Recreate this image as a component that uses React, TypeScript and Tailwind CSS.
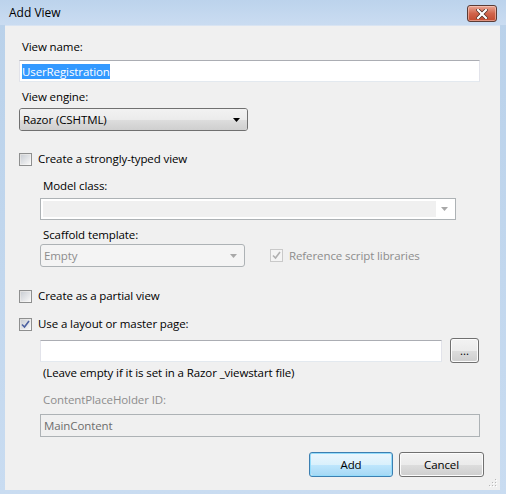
import React from 'react';

function Arrow({ disabled = false }: { disabled?: boolean }) {
  return (
    <svg width="7" height="4" viewBox="0 0 7 4" className="shrink-0">
      <path d="M0 0H7L3.5 4Z" fill={disabled ? '#a8a8a8' : '#000'} />
    </svg>
  );
}

function CheckBox({ checked = false, disabled = false }: { checked?: boolean; disabled?: boolean }) {
  return (
    <div
      className={`w-[13px] h-[13px] shrink-0 border flex items-center justify-center ${
        disabled ? 'border-[#c9c9c9] bg-[#f4f4f4]' : 'border-[#8e8f8f] bg-gradient-to-br from-[#dcdcdc] to-[#fbfbfb]'
      }`}
    >
      <div
        className={`w-[9px] h-[9px] flex items-center justify-center ${
          disabled ? 'bg-[#f4f4f4]' : 'bg-gradient-to-br from-[#cbcfd5] to-[#f6f6f6]'
        }`}
      >
        {checked && (
          <svg width="9" height="9" viewBox="0 0 9 9">
            <path
              d="M1 4.5L3.5 7L8 1"
              fill="none"
              stroke={disabled ? '#b0b0b0' : '#4c61a0'}
              strokeWidth="1.6"
            />
          </svg>
        )}
      </div>
    </div>
  );
}

function WinButton({ label, primary = false, className = '' }: { label: string; primary?: boolean; className?: string }) {
  return (
    <button
      type="button"
      className={`relative rounded-[3px] border text-black ${className} ${
        primary
          ? 'border-[#3c7fb1] shadow-[inset_0_0_0_1px_#94dcfb]'
          : 'border-[#707070] shadow-[inset_0_0_0_1px_#fcfcfc]'
      }`}
    >
      <div className="absolute inset-[1px] flex flex-col rounded-[2px] overflow-hidden">
        <div className={`flex-1 ${primary ? 'bg-gradient-to-b from-[#eaf6fd] to-[#d9f0fc]' : 'bg-gradient-to-b from-[#f2f2f2] to-[#ebebeb]'}`} />
        <div className={`flex-1 ${primary ? 'bg-gradient-to-b from-[#bee6fd] to-[#a7d9f5]' : 'bg-gradient-to-b from-[#dddddd] to-[#cfcfcf]'}`} />
      </div>
      <span className="relative">{label}</span>
    </button>
  );
}

export default function App() {
  return (
    <div
      className="w-[506px] h-[494px] flex flex-col bg-gradient-to-b from-[#b9d1ea] to-[#c9dcf1] text-[11.5px] tracking-[-0.1px] leading-[16px] text-black"
      style={{ fontFamily: '"Open Sans", "Noto Sans", sans-serif' }}
    >
      {/* title bar */}
      <div className="h-[25px] shrink-0 flex items-start pl-[9px] pr-[9px] bg-gradient-to-b from-[#bcd3ec] to-[#cadcf1]">
        <span className="mt-[6px] text-[12px] leading-[14px] tracking-normal">Add View</span>
        <div className="ml-auto mt-[5px] w-[30px] h-[17px] rounded-[3px] border border-[#5a3b35] bg-gradient-to-b from-[#e9a593] via-[#d0644b] to-[#c24a2e] flex items-center justify-center shadow-[inset_0_0_0_1px_rgba(255,220,210,0.5)]">
          <svg width="12" height="10" viewBox="0 0 12 10">
            <path d="M2 1L10 9M10 1L2 9" stroke="#4a2a22" strokeWidth="3.6" strokeLinecap="square" />
            <path d="M2 1L10 9M10 1L2 9" stroke="#fff" strokeWidth="2.2" strokeLinecap="square" />
          </svg>
        </div>
      </div>

      {/* client area */}
      <div className="relative flex-1 ml-[5px] mr-[6px] mb-[4px] bg-[#f0f0f0] border-t border-[#d9e4f2] pl-[14px] pr-[20px] pt-[13px] flex flex-col">
        <div className="pl-[3px]">View name:</div>
        <div className="mt-[5px] h-[22px] border border-[#abadb3] border-x-[#e2e3ea] border-b-[#e3e9ef] bg-white flex items-center pl-[2px]">
          <span className="bg-[#3399ff] text-white leading-[15px]">UserRegistration</span>
        </div>

        <div className="mt-[7px] pl-[3px]">View engine:</div>
        <div className="mt-[3px] w-[229px] h-[23px] rounded-[3px] border border-[#707070] relative">
          <div className="absolute inset-0 flex flex-col rounded-[2px] overflow-hidden">
            <div className="flex-1 bg-gradient-to-b from-[#f2f2f2] to-[#ebebeb]" />
            <div className="flex-1 bg-gradient-to-b from-[#dddddd] to-[#cfcfcf]" />
          </div>
          <div className="relative h-full flex items-center pl-[3px] pr-[7px]">
            <span>Razor (CSHTML)</span>
            <span className="ml-auto">
              <Arrow />
            </span>
          </div>
        </div>

        <div className="mt-[20px] flex items-center gap-[6px]">
          <CheckBox />
          <span>Create a strongly-typed view</span>
        </div>

        <div className="pl-[21px] flex flex-col">
          <div className="mt-[11px] pl-[3px]">Model class:</div>
          <div className="mt-[4px] w-[416px] h-[22px] border border-[#adb2b5] bg-white flex items-center p-[2px]">
            <div className="flex-1 h-full bg-[#f0f0f0]" />
            <div className="w-[17px] flex justify-center">
              <Arrow disabled />
            </div>
          </div>

          <div className="mt-[7px] pl-[3px]">Scaffold template:</div>
          <div className="mt-[1px] flex items-center">
            <div className="w-[205px] h-[23px] rounded-[3px] border border-[#adb2b5] bg-[#f4f4f4] flex items-center pl-[3px] pr-[7px] text-[#8d8d8d]">
              <span>Empty</span>
              <span className="ml-auto">
                <Arrow disabled />
              </span>
            </div>
            <div className="ml-[25px] flex items-center gap-[6px] text-[#8d8d8d]">
              <CheckBox checked disabled />
              <span>Reference script libraries</span>
            </div>
          </div>
        </div>

        <div className="mt-[21px] flex items-center gap-[6px]">
          <CheckBox />
          <span>Create as a partial view</span>
        </div>

        <div className="mt-[12px] flex items-center gap-[6px]">
          <CheckBox checked />
          <span>Use a layout or master page:</span>
        </div>

        <div className="pl-[21px] flex flex-col">
          <div className="mt-[6px] flex items-center">
            <div className="w-[402px] h-[22px] border border-[#abadb3] border-x-[#e2e3ea] border-b-[#e3e9ef] bg-white" />
            <WinButton label="..." className="ml-[8px] w-[29px] h-[25px] leading-[10px]" />
          </div>
          <div className="mt-[2px] pl-[3px]">(Leave empty if it is set in a Razor _viewstart file)</div>

          <div className="mt-[11px] pl-[3px] text-[#8d8d8d]">ContentPlaceHolder ID:</div>
          <div className="mt-[6px] h-[23px] border border-[#adb2b5] bg-[#f0f0f0] flex items-center pl-[3px] text-[#6d6d6d]">
            MainContent
          </div>
        </div>

        <div className="mt-[15px] flex justify-end gap-[6px] -mr-[4px]">
          <WinButton label="Add" primary className="w-[84px] h-[25px]" />
          <WinButton label="Cancel" className="w-[85px] h-[25px]" />
        </div>

        {/* size grip */}
        <svg className="absolute right-[2px] bottom-[2px]" width="10" height="10" viewBox="0 0 10 10">
          {[
            [8, 2],
            [8, 5],
            [5, 5],
            [8, 8],
            [5, 8],
            [2, 8],
          ].map(([x, y]) => (
            <g key={`${x}-${y}`}>
              <rect x={x} y={y} width="1" height="1" fill="#fff" />
              <rect x={x - 1} y={y - 1} width="1" height="1" fill="#b8b8b8" />
            </g>
          ))}
        </svg>
      </div>
    </div>
  );
}
